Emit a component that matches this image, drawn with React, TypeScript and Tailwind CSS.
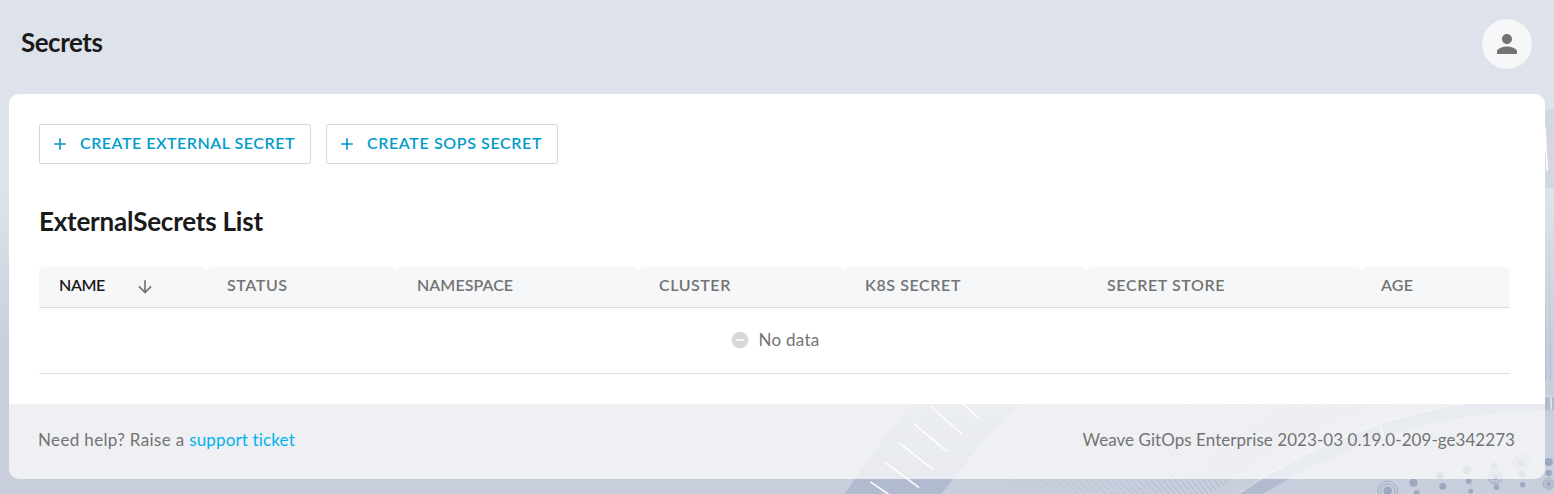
import React from "react";
import { MdAdd, MdArrowDownward, MdPerson, MdRemoveCircle } from "react-icons/md";

const CX = 1554;
const CY = 954.5;

function polar(radius: number, degrees: number): [number, number] {
  const a = (degrees * Math.PI) / 180;
  return [CX - radius * Math.cos(a), CY - radius * Math.sin(a)];
}

function ray(from: number, to: number, degrees: number): string {
  const [x1, y1] = polar(from, degrees);
  const [x2, y2] = polar(to, degrees);
  return `M${x1.toFixed(2)} ${y1.toFixed(2)}L${x2.toFixed(2)} ${y2.toFixed(2)}`;
}

const ticks = Array.from({ length: 12 }, (_, i) => ray(788, 831, 33 + i * 1.665)).join("");
const hatch = Array.from({ length: 150 }, (_, i) => ray(575, 722, 26 + i * 0.43)).join("");

const dots: { x: number; y: number; r: number; rings?: number[] }[] = [
  { x: 1387.7, y: 491, r: 4.4, rings: [7, 9.8] },
  { x: 1413.5, y: 482.7, r: 4 },
  { x: 1416.7, y: 493.3, r: 3 },
  { x: 1442.7, y: 486.3, r: 3.4 },
  { x: 1440, y: 475.7, r: 3.6 },
  { x: 1466.7, y: 470, r: 4 },
  { x: 1468.7, y: 481, r: 2.9 },
  { x: 1470.7, y: 491.2, r: 2.4 },
  { x: 1494, y: 466, r: 3.3 },
  { x: 1495.3, y: 477, r: 3.3, rings: [5.3, 7.2] },
  { x: 1496.5, y: 487.3, r: 2.7 },
  { x: 1521.3, y: 463.3, r: 3.8, rings: [6, 8.4] },
  { x: 1522, y: 474.3, r: 3.3 },
  { x: 1522.7, y: 484.7, r: 2.6 },
  { x: 1548.7, y: 462, r: 4.1 },
  { x: 1548.7, y: 473, r: 3.2 },
  { x: 1548.7, y: 483.7, r: 2.2, rings: [3.8, 5.5] },
];

function Backdrop() {
  return (
    <svg className="absolute inset-0 h-[494px] w-[1554px]" viewBox="0 0 1554 494" fill="none">
      <defs>
        <linearGradient id="band" gradientUnits="userSpaceOnUse" x1="0" y1="190" x2="0" y2="480">
          <stop offset="0" stopColor="#d2d7e2" />
          <stop offset="1" stopColor="#b1bacf" />
        </linearGradient>
        <radialGradient id="hatch" gradientUnits="userSpaceOnUse" cx={CX} cy={CY} r="722">
          <stop offset="0.8" stopColor="#a3acc2" stopOpacity="0.75" />
          <stop offset="1" stopColor="#a3acc2" stopOpacity="0.15" />
        </radialGradient>
      </defs>
      <circle cx={CX} cy={CY} r="806" stroke="url(#band)" strokeWidth="79" />
      <path d={ticks} stroke="#ffffff" strokeWidth="1.6" />
      <path d="M1545 127L1547.2 171" stroke="#ffffff" strokeWidth="1.6" />
      <path d={hatch} stroke="url(#hatch)" strokeWidth="0.9" />
      <circle cx={CX} cy={CY} r="551" stroke="#b1bacf" strokeWidth="13" />
      <circle cx={CX} cy={CY} r="558.5" stroke="#d3d8e3" strokeWidth="1.4" />
      <path d={ray(545, 557, 71.8) + ray(545, 557, 89.7)} stroke="#e3e7ee" strokeWidth="1.6" />
      {dots.map((d) => (
        <g key={`${d.x}-${d.y}`}>
          <circle cx={d.x} cy={d.y} r={d.r} fill="#9ca7c2" />
          {d.rings?.map((r) => (
            <circle key={r} cx={d.x} cy={d.y} r={r} stroke="#9ca7c2" strokeWidth="0.9" />
          ))}
        </g>
      ))}
    </svg>
  );
}

function CreateButton({ label, width, text }: { label: string; width: string; text: string }) {
  return (
    <button
      className={`flex h-10 items-center rounded-[2px] border border-[#d8d8d8] pl-[10px] text-[#009ccc] ${width}`}
    >
      <MdAdd className="size-5 shrink-0" />
      <span className={`ml-[10px] pb-[2px] text-[16px] font-semibold whitespace-nowrap ${text}`}>{label}</span>
    </button>
  );
}

const columns = [
  { label: "NAME", width: "w-[168px]", text: "tracking-[-0.4px]", active: true },
  { label: "STATUS", width: "w-[190px]", text: "tracking-[0.6px]" },
  { label: "NAMESPACE", width: "w-[242px]", text: "tracking-[0.05px]" },
  { label: "CLUSTER", width: "w-[206px]", text: "tracking-[0.55px]" },
  { label: "K8S SECRET", width: "w-[242px]", text: "tracking-[0.6px]" },
  { label: "SECRET STORE", width: "w-[274px]", text: "tracking-[0.6px]" },
  { label: "AGE", width: "w-[149px]", text: "tracking-[0.2px]" },
];

export default function App() {
  return (
    <div className="relative h-[494px] w-[1554px] overflow-hidden bg-[linear-gradient(180deg,#dee3eb_0px,#dee3eb_190px,#c8cedc_350px,#c8cedc_494px)] font-['Lato','Liberation_Sans',sans-serif]">
      <Backdrop />
      <div className="relative flex h-full flex-col">
        <header className="flex h-[94px] items-start justify-between pt-[19px] pr-[22px] pl-[21px]">
          <h1 className="mt-[3px] text-[26px] leading-10 font-bold tracking-[-0.5px] text-[#1a1a1a]">Secrets</h1>
          <button className="flex size-[50px] items-center justify-center rounded-full bg-[#f5f7f9] text-[#737373]">
            <MdPerson className="size-[30px]" />
          </button>
        </header>

        <main className="mx-[9px] h-[310px] rounded-t-[10px] bg-white px-[30px] pt-[30px]">
          <div className="flex gap-[15px]">
            <CreateButton label="CREATE EXTERNAL SECRET" width="w-[272px]" text="tracking-[0.52px]" />
            <CreateButton label="CREATE SOPS SECRET" width="w-[232px]" text="tracking-[0.62px]" />
          </div>
          <h2 className="mt-[37px] text-[26px] leading-10 font-bold tracking-[-0.22px] text-[#1a1a1a]">
            ExternalSecrets List
          </h2>
          <div className="mt-[26px] w-[1471px]">
            <div className="flex h-[41px] border-b border-[#dcdfe2]">
              {columns.map((c) => (
                <div
                  key={c.label}
                  className={`flex h-10 items-center rounded-t-[5px] bg-[#f5f7f9] pb-[2px] pl-5 ${c.width}`}
                >
                  <span
                    className={`pb-[2px] text-[16px] font-semibold ${c.text} ${c.active ? "w-[76px] text-[#1a1a1a]" : "text-[#737373]"}`}
                  >
                    {c.label}
                  </span>
                  {c.active && <MdArrowDownward className="mt-[2px] size-5 text-[#737373]" />}
                </div>
              ))}
            </div>
            <div className="flex h-[66px] items-center justify-center border-b border-[#dcdfe2] pb-[2px] text-[#737373]">
              <MdRemoveCircle className="size-5 text-[#d8d8d8]" />
              <span className="ml-[9px] text-[17px] leading-6 tracking-[0.25px]">No data</span>
            </div>
          </div>
        </main>

        <footer className="mx-[9px] flex h-[75px] items-center justify-between rounded-b-[10px] bg-[#fdfdfc]/72 pr-[30px] pb-[3px] pl-[29px] text-[17px] text-[#737373]">
          <p className="tracking-[0.35px]">
            Need help? Raise a{" "}
            <a href="#support" className="tracking-[0.15px] text-[#00b3ec]">
              support ticket
            </a>
          </p>
          <p className="tracking-[0.05px]">Weave GitOps Enterprise 2023-03 0.19.0-209-ge342273</p>
        </footer>
      </div>
    </div>
  );
}
